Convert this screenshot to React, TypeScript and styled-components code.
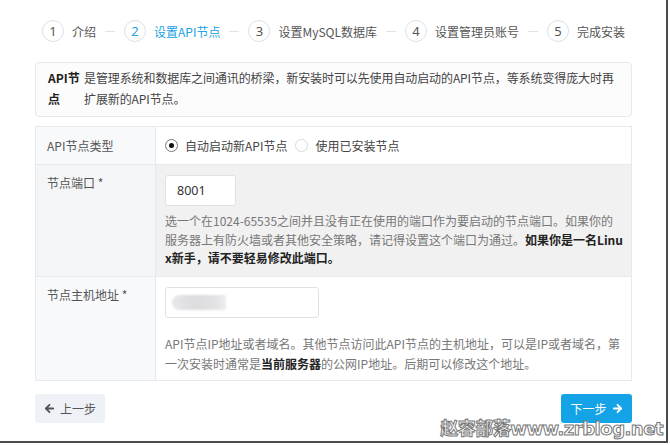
import React from 'react';
import styled, { createGlobalStyle } from 'styled-components';

const GlobalStyle = createGlobalStyle`
  body {
    margin: 0;
    background: #ffffff;
    font-family: "Noto Sans CJK SC", "Noto Sans", sans-serif;
    color: #555;
  }
`;

const STEPS = ['介绍', '设置API节点', '设置MySQL数据库', '设置管理员账号', '完成安装'];
const ACTIVE_STEP = 1;

export default function App() {
  const stepsMarkup = STEPS.map((title, idx) => {
    const isActive = idx === ACTIVE_STEP;
    return (
      <React.Fragment key={title}>
        {idx > 0 && <StepDash />}
        <Step $active={isActive}>
          <StepCircle>{idx + 1}</StepCircle>
          <span>{title}</span>
        </Step>
      </React.Fragment>
    );
  });

  return (
    <Frame>
      <GlobalStyle />
      <Page>
        <Steps>{stepsMarkup}</Steps>

        <Alert>
          <AlertLabel>API节点</AlertLabel>
          <AlertText>
            是管理系统和数据库之间通讯的桥梁，新安装时可以先使用自动启动的API节点，等系统变得庞大时再扩展新的API节点。
          </AlertText>
        </Alert>

        <FormTable>
          <Row $height={38}>
            <LabelCell $center>API节点类型</LabelCell>
            <ValueCell $center>
              <RadioGroup>
                <Radio>
                  <RadioDot $checked />
                  自动启动新API节点
                </Radio>
                <Radio>
                  <RadioDot />
                  使用已安装节点
                </Radio>
              </RadioGroup>
            </ValueCell>
          </Row>

          <Row $hover $height={112}>
            <LabelCell>节点端口 *</LabelCell>
            <ValueCell>
              <Input $width={71}>8001</Input>
              <Help $gap={6} $lh={18.5}>
                选一个在1024-65535之间并且没有正在使用的端口作为要启动的节点端口。如果你的服务器上有防火墙或者其他安全策略，请记得设置这个端口为通过。
                <b>如果你是一名Linux新手，请不要轻易修改此端口。</b>
              </Help>
            </ValueCell>
          </Row>

          <Row $height={103} $last>
            <LabelCell>节点主机地址 *</LabelCell>
            <ValueCell>
              <Input $width={154}>
                <Blur />
              </Input>
              <Help $gap={16} $lh={20}>
                API节点IP地址或者域名。其他节点访问此API节点的主机地址，可以是IP或者域名，第一次安装时通常是<b>当前服务器</b>的公网IP地址。后期可以修改这个地址。
              </Help>
            </ValueCell>
          </Row>
        </FormTable>

        <Footer>
          <BackButton>
            <Arrow viewBox="0 0 12 12">
              <path d="M10 6H2.5M6 2L2 6l4 4" />
            </Arrow>
            上一步
          </BackButton>
          <NextButton>
            下一步
            <Arrow viewBox="0 0 12 12">
              <path d="M2 6h7.5M6 2l4 4-4 4" />
            </Arrow>
          </NextButton>
        </Footer>
      </Page>
      <Watermark>赵容部落www.zrblog.net</Watermark>
    </Frame>
  );
}

const Frame = styled.div`
  position: relative;
  width: 666px;
  height: 441px;
  border-right: 2px solid #4a4a4a;
  border-bottom: 2px solid #4a4a4a;
  overflow: hidden;
  background: #fff;
`;

const Page = styled.div`
  display: flex;
  flex-direction: column;
  padding: 20px 34px 0 35px;
`;

const Steps = styled.div`
  display: flex;
  align-items: center;
  height: 22px;
  padding-left: 7px;
  font-size: 12px;
`;

const Step = styled.div<{ $active?: boolean }>`
  display: flex;
  align-items: center;
  gap: 8px;
  color: ${(p) => (p.$active ? '#22a2e4' : '#555')};
  white-space: nowrap;
`;

const StepCircle = styled.div`
  width: 20px;
  height: 20px;
  border: 1.5px solid #dbe1ea;
  border-radius: 50%;
  display: flex;
  align-items: center;
  justify-content: center;
  font-family: "Noto Sans", sans-serif;
  font-size: 13px;
`;

const StepDash = styled.div`
  width: 10px;
  height: 1px;
  background: #dfe3e8;
  margin: 0 9px;
`;

const Alert = styled.div`
  display: flex;
  margin-top: 20px;
  padding: 4px 6px 7px 12px;
  border: 1px solid #e6e9ee;
  border-radius: 4px;
  background: #fcfcfd;
  font-size: 12px;
  line-height: 21px;
`;

const AlertLabel = styled.div`
  width: 36px;
  flex-shrink: 0;
  font-weight: bold;
  color: #222;
`;

const AlertText = styled.div`
  flex: 1;
  color: #444;
  letter-spacing: -0.1px;
`;

const FormTable = styled.div`
  margin-top: 9px;
  border: 1px solid #e6e9ee;
  display: flex;
  flex-direction: column;
`;

const Row = styled.div<{ $hover?: boolean; $height: number; $last?: boolean }>`
  display: grid;
  grid-template-columns: 120px 1fr;
  height: ${(p) => p.$height}px;
  box-sizing: border-box;
  border-bottom: ${(p) => (p.$last ? 'none' : '1px solid #e6e9ee')};
  background: ${(p) => (p.$hover ? '#f1f1f1' : 'transparent')};
  font-size: 12px;
`;

const LabelCell = styled.div<{ $center?: boolean }>`
  display: flex;
  align-items: ${(p) => (p.$center ? 'center' : 'flex-start')};
  padding: ${(p) => (p.$center ? '0 11px' : '8px 11px')};
  line-height: 19px;
  border-right: 1px solid #e6e9ee;
  background: rgba(245, 247, 250, 0.7);
  color: #555;
`;

const ValueCell = styled.div<{ $center?: boolean }>`
  display: flex;
  flex-direction: column;
  justify-content: ${(p) => (p.$center ? 'center' : 'flex-start')};
  padding: ${(p) => (p.$center ? '0 9px' : '10px 8px 0 9px')};
`;

const RadioGroup = styled.div`
  display: flex;
  gap: 8px;
`;

const Radio = styled.label`
  display: flex;
  align-items: center;
  gap: 7px;
  color: #444;
`;

const RadioDot = styled.span<{ $checked?: boolean }>`
  width: 11px;
  height: 11px;
  border-radius: 50%;
  border: 1px solid ${(p) => (p.$checked ? '#777' : '#d4d8de')};
  background: #fff;
  display: flex;
  align-items: center;
  justify-content: center;

  &::after {
    content: '';
    width: 5px;
    height: 5px;
    border-radius: 50%;
    background: ${(p) => (p.$checked ? '#111' : 'transparent')};
  }
`;

const Input = styled.div<{ $width: number }>`
  width: ${(p) => p.$width}px;
  height: 31px;
  box-sizing: border-box;
  padding: 0 11px;
  display: flex;
  align-items: center;
  background: #fff;
  border: 1px solid #dde2e8;
  border-radius: 3px;
  font-family: "Noto Sans", sans-serif;
  font-size: 12.5px;
  color: #333;
`;

const Blur = styled.div`
  width: 54px;
  height: 15px;
  margin-left: -5px;
  border-radius: 8px 2px 2px 8px;
  background: linear-gradient(90deg, #e8e8ea 0%, #dcdcde 40%, #e2e2e4 80%, #eeeeef 100%);
  filter: blur(1px);
`;

const Help = styled.div<{ $gap: number; $lh: number }>`
  margin-top: ${(p) => p.$gap}px;
  line-height: ${(p) => p.$lh}px;
  color: #777;
  word-break: break-all;

  b {
    color: #222;
  }
`;

const Footer = styled.div`
  display: flex;
  justify-content: space-between;
  margin-top: 13px;
`;

const BaseButton = styled.div`
  height: 29px;
  display: flex;
  align-items: center;
  justify-content: center;
  gap: 5px;
  border-radius: 3px;
  font-size: 12px;
  white-space: nowrap;
  box-sizing: border-box;
`;

const BackButton = styled(BaseButton)`
  width: 70px;
  background: #eef1f6;
  color: #555;
`;

const NextButton = styled(BaseButton)`
  width: 71px;
  background: #15a3e8;
  color: #fff;
`;

const Arrow = styled.svg`
  width: 11px;
  height: 11px;
  fill: none;
  stroke: currentColor;
  stroke-width: 2;
  stroke-linecap: round;
  stroke-linejoin: round;
`;

const Watermark = styled.div`
  position: absolute;
  right: 3px;
  bottom: 1px;
  font-family: "DejaVu Sans", "Noto Sans CJK SC", sans-serif;
  font-size: 18px;
  font-weight: bold;
  letter-spacing: -0.5px;
  color: #fff;
  -webkit-text-stroke: 1px #777;
  white-space: nowrap;
`;
